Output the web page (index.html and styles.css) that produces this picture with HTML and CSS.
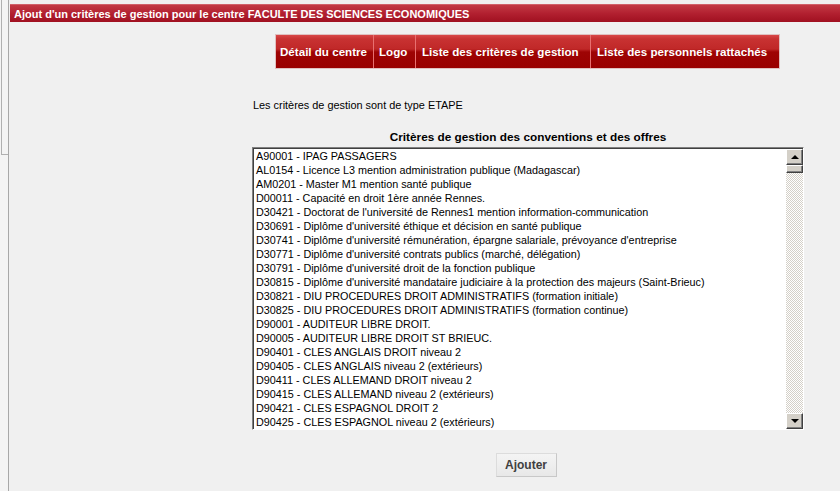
FILE: index.html
```html
<!DOCTYPE html>
<html lang="fr">
<head>
<meta charset="utf-8">
<title>Ajout d'un critères de gestion</title>
<link rel="stylesheet" href="styles.css">
</head>
<body>
<div class="page">
  <div class="side"><div class="side-frame"></div></div>
  <div class="main">
    <div class="titlebar">Ajout d'un critères de gestion pour le centre FACULTE DES SCIENCES ECONOMIQUES</div>
    <div class="content">
      <div class="tabs">
        <a class="tab">Détail du centre</a>
        <a class="tab">Logo</a>
        <a class="tab">Liste des critères de gestion</a>
        <a class="tab">Liste des personnels rattachés</a>
      </div>
      <p class="info">Les critères de gestion sont de type ETAPE</p>
      <h2 class="heading">Critères de gestion des conventions et des offres</h2>
      <div class="listbox">
        <div class="items">
          <div class="item">A90001 - IPAG PASSAGERS</div>
          <div class="item">AL0154 - Licence L3 mention administration publique (Madagascar)</div>
          <div class="item">AM0201 - Master M1 mention santé publique</div>
          <div class="item">D00011 - Capacité en droit 1ère année Rennes.</div>
          <div class="item">D30421 - Doctorat de l'université de Rennes1 mention information-communication</div>
          <div class="item">D30691 - Diplôme d'université éthique et décision en santé publique</div>
          <div class="item">D30741 - Diplôme d'université rémunération, épargne salariale, prévoyance d'entreprise</div>
          <div class="item">D30771 - Diplôme d'université contrats publics (marché, délégation)</div>
          <div class="item">D30791 - Diplôme d'université droit de la fonction publique</div>
          <div class="item">D30815 - Diplôme d'université mandataire judiciaire à la protection des majeurs (Saint-Brieuc)</div>
          <div class="item">D30821 - DIU PROCEDURES DROIT ADMINISTRATIFS (formation initiale)</div>
          <div class="item">D30825 - DIU PROCEDURES DROIT ADMINISTRATIFS (formation continue)</div>
          <div class="item">D90001 - AUDITEUR LIBRE DROIT.</div>
          <div class="item">D90005 - AUDITEUR LIBRE DROIT ST BRIEUC.</div>
          <div class="item">D90401 - CLES ANGLAIS DROIT niveau 2</div>
          <div class="item">D90405 - CLES ANGLAIS niveau 2 (extérieurs)</div>
          <div class="item">D90411 - CLES ALLEMAND DROIT niveau 2</div>
          <div class="item">D90415 - CLES ALLEMAND niveau 2 (extérieurs)</div>
          <div class="item">D90421 - CLES ESPAGNOL DROIT 2</div>
          <div class="item">D90425 - CLES ESPAGNOL niveau 2 (extérieurs)</div>
        </div>
        <div class="scrollbar">
          <div class="sb-btn"><span class="arrow up"></span></div>
          <div class="sb-thumb"></div>
          <div class="sb-track"></div>
          <div class="sb-btn"><span class="arrow down"></span></div>
        </div>
      </div>
      <div class="actions">
        <button class="btn" type="button">Ajouter</button>
      </div>
    </div>
  </div>
</div>
</body>
</html>
```

FILE: styles.css
```css
html, body {
  margin: 0;
  padding: 0;
  background: #f0f0f0;
  font-family: "Liberation Sans", Arial, sans-serif;
}

.page {
  display: flex;
  width: 840px;
  height: 491px;
  overflow: hidden;
}

.side {
  width: 8px;
  background: #f4f4f4;
  border-right: 1px solid #a8a8a8;
  flex: none;
}

.side-frame {
  margin-left: 1px;
  height: 155px;
  border-left: 1px solid #b0b0b0;
  border-bottom: 1px solid #b0b0b0;
  box-sizing: border-box;
}

.main {
  flex: 1;
  padding-top: 4px;
  padding-left: 1px;
  background: #f0f0f0;
}

.titlebar {
  height: 18px;
  line-height: 18px;
  padding-left: 4px;
  background: linear-gradient(#c23a44 0%, #b22030 50%, #a01020 100%);
  color: #ffffff;
  font-size: 11px;
  font-weight: bold;
  border-top: 1px solid #d06068;
  box-sizing: border-box;
}

.content {
  padding-left: 242px;
}

.tabs {
  margin-top: 13px;
  margin-left: 24px;
  display: flex;
  width: 503px;
  height: 33px;
  background: linear-gradient(#d84848 0px, #c83232 4px, #c02828 14px, #9e0404 17px, #990000 33px);
  box-shadow: 0 0 0 1px #e0c0c0;
}

.tab {
  display: flex;
  align-items: center;
  padding: 0 7px 0 4px;
  color: #ffffff;
  font-size: 11.6px;
  font-weight: bold;
  white-space: nowrap;
  border-left: 1px solid #e87070;
}

.tab:first-child {
  border-left: none;
}

.tab:nth-child(1) { width: 97px; box-sizing: border-box; }
.tab:nth-child(2) { width: 42px; box-sizing: border-box; padding-left: 5px; }
.tab:nth-child(3) { width: 175px; box-sizing: border-box; padding-left: 6px; }
.tab:nth-child(4) { flex: 1; padding-left: 6px; }

.info {
  margin: 30px 0 0 1px;
  font-size: 10.9px;
  line-height: 14px;
  color: #000;
}

.heading {
  margin: 18px 0 0 0;
  width: 552px;
  text-align: center;
  font-size: 11.8px;
  line-height: 14px;
  font-weight: bold;
  color: #000;
}

.listbox {
  margin-top: 3px;
  width: 552px;
  height: 283px;
  display: flex;
  background: #ffffff;
  border-top: 1px solid #808080;
  border-left: 1px solid #808080;
  border-right: 1px solid #ffffff;
  border-bottom: 1px solid #ffffff;
  box-shadow: inset 1px 1px 0 #404040;
  box-sizing: border-box;
  overflow: hidden;
}

.items {
  flex: 1;
  padding: 1px 0 0 3px;
  overflow: hidden;
}

.item {
  font-size: 10.8px;
  line-height: 14px;
  height: 14px;
  white-space: nowrap;
  color: #000;
}

.scrollbar {
  width: 17px;
  display: flex;
  flex-direction: column;
  margin-top: 1px;
  background-color: #ffffff;
  background-image:
    linear-gradient(45deg, #d4d0c8 25%, transparent 25%, transparent 75%, #d4d0c8 75%),
    linear-gradient(45deg, #d4d0c8 25%, transparent 25%, transparent 75%, #d4d0c8 75%);
  background-size: 2px 2px;
  background-position: 0 0, 1px 1px;
}

.sb-btn,
.sb-thumb {
  height: 16px;
  flex: none;
  background: #d4d0c8;
  border-top: 1px solid #ffffff;
  border-left: 1px solid #ffffff;
  border-right: 1px solid #404040;
  border-bottom: 1px solid #404040;
  box-shadow: inset -1px -1px 0 #808080;
  box-sizing: border-box;
  display: flex;
  align-items: center;
  justify-content: center;
}

.sb-thumb {
  height: 8px;
}

.sb-track {
  flex: 1;
}

.arrow {
  width: 0;
  height: 0;
  border-left: 4px solid transparent;
  border-right: 4px solid transparent;
}

.arrow.up {
  border-bottom: 4px solid #000;
}

.arrow.down {
  border-top: 4px solid #000;
}

.actions {
  width: 552px;
  display: flex;
  justify-content: center;
  margin-top: 23px;
}

.btn {
  margin-left: -4px;
  width: 61px;
  height: 24px;
  font-family: "Liberation Sans", Arial, sans-serif;
  font-size: 12px;
  font-weight: bold;
  color: #404040;
  background: linear-gradient(#f4f4f4, #e8e8e8);
  border: 1px solid #dcdcdc;
  border-right-color: #c8c8c8;
  border-bottom-color: #c8c8c8;
  padding: 0;
}
```
